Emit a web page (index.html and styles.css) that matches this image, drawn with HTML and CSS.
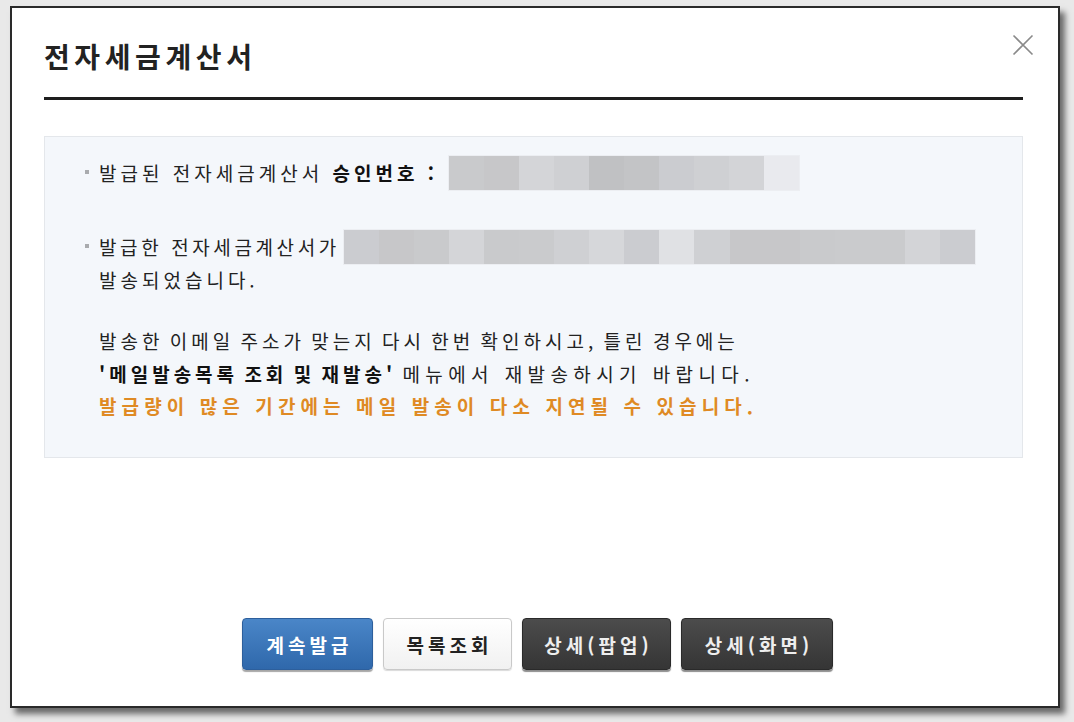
FILE: index.html
```html
<!DOCTYPE html>
<html lang="ko">
<head>
<meta charset="utf-8">
<title>전자세금계산서</title>
<link rel="stylesheet" href="styles.css">
</head>
<body>
<div class="dialog">
  <div class="header">
    <h1 class="title">전자세금계산서</h1>
    <button class="close" aria-label="닫기">
      <svg width="22" height="22" viewBox="0 0 22 22"><path d="M1.5 1.5 L20.5 20.5 M20.5 1.5 L1.5 20.5" stroke="#8a8a8a" stroke-width="1.6" fill="none"/></svg>
    </button>
  </div>
  <div class="body">
    <div class="info">
      <div class="item">
        <span class="bullet"></span>
        <p class="line">발급된 전자세금계산서 <b>승인번호 :</b><span class="mosaic m-short">
          <i class="c3"></i><i class="c2"></i><i class="c6"></i><i class="c5"></i><i class="c1"></i><i class="c1b"></i><i class="c4"></i><i class="c5"></i><i class="c6b"></i><i class="c9"></i>
        </span></p>
      </div>
      <div class="item">
        <span class="bullet"></span>
        <p class="line"><span class="tight">발급한 전자세금계산서가</span><span class="mosaic m-long">
          <i class="c4"></i><i class="c2"></i><i class="c3"></i><i class="c6"></i><i class="c3"></i><i class="c3b"></i><i class="c5"></i><i class="c7"></i><i class="c4"></i><i class="c8"></i><i class="c5"></i><i class="c2"></i><i class="c2"></i><i class="c3"></i><i class="c3b"></i><i class="c3b"></i><i class="c6b"></i><i class="c4"></i>
        </span><br>발송되었습니다.</p>
      </div>
      <div class="notice">
        <p class="line">발송한 이메일 주소가 맞는지 다시 한번 확인하시고, 틀린 경우에는</p>
        <p class="line"><b>'메일발송목록 조회 및 재발송'</b> <span class="wide">메뉴에서 재발송하시기 바랍니다.</span></p>
        <p class="line warn">발급량이 많은 기간에는 메일 발송이 다소 지연될 수 있습니다.</p>
      </div>
    </div>
  </div>
  <div class="actions">
    <button class="btn btn-blue">계속발급</button>
    <button class="btn btn-white">목록조회</button>
    <button class="btn btn-dark">상세(팝업)</button>
    <button class="btn btn-dark btn-wide">상세(화면)</button>
  </div>
</div>
</body>
</html>
```
FILE: styles.css
```css
html, body {
  margin: 0;
  padding: 0;
}
body {
  background: #e9e9e9;
  width: 1074px;
  height: 722px;
  overflow: hidden;
  font-family: "Noto Sans CJK KR", "Noto Sans", sans-serif;
  color: #222;
}
.dialog {
  box-sizing: border-box;
  margin: 6px 0 0 10px;
  width: 1050px;
  height: 702px;
  background: #fff;
  border: 2px solid #2a2a2a;
  box-shadow: 5px 6px 6px rgba(0, 0, 0, 0.55);
  display: flex;
  flex-direction: column;
  padding: 0 35px 0 32px;
}
.header {
  position: relative;
  padding: 30px 0 23px 0;
  border-bottom: 3px solid #1e1e1e;
}
.title {
  margin: 0;
  font-size: 28px;
  line-height: 36px;
  font-weight: 700;
  letter-spacing: 4.6px;
  color: #222;
}
.close {
  position: absolute;
  right: -11px;
  top: 26px;
  width: 22px;
  height: 22px;
  padding: 0;
  border: 0;
  background: transparent;
}
.close svg {
  display: block;
}
.body {
  flex: 1;
  padding-top: 36px;
}
.info {
  background: #f4f7fb;
  border: 1px solid #e4e7eb;
  padding: 19px 0 34px 54px;
  height: 322px;
  box-sizing: border-box;
}
.item {
  position: relative;
  margin-bottom: 41px;
}
.item + .item {
  margin-bottom: 29px;
}
.bullet {
  position: absolute;
  left: -14px;
  top: 14px;
  width: 4px;
  height: 4px;
  background: #a9abae;
}
.line {
  margin: 0;
  font-size: 19px;
  line-height: 33px;
  letter-spacing: 4px;
  word-spacing: 0;
  color: #222;
}
.line .tight {
  letter-spacing: 3.6px;
}
.notice .line {
  line-height: 32.5px;
  word-spacing: -3px;
}
.line b {
  font-weight: 700;
  color: #111;
}
.notice .wide {
  letter-spacing: 5.4px;
  word-spacing: 0;
}
.notice .warn {
  color: #df8a24;
  font-weight: 700;
  letter-spacing: 5.1px;
  word-spacing: 0;
}
.mosaic {
  display: inline-flex;
  vertical-align: top;
  height: 36px;
  margin-top: -1px;
  margin-bottom: -2px;
  border: 1px solid #eceef2;
  box-sizing: border-box;
}
.m-short {
  width: 352px;
  margin-left: 10px;
}
.m-long {
  width: 633px;
  margin-left: 3px;
}
.mosaic i {
  flex: 1;
  display: block;
}
.c1 { background: #c0c1c3; }
.c1b { background: #c3c4c6; }
.c2 { background: #c7c7c9; }
.c3 { background: #c9cacc; }
.c3b { background: #cacbcd; }
.c4 { background: #cbccd0; }
.c5 { background: #cfd0d3; }
.c6 { background: #d4d5d8; }
.c6b { background: #d3d4d7; }
.c7 { background: #d6d7da; }
.c8 { background: #e0e1e4; }
.c9 { background: #e9eaee; }
.actions {
  display: flex;
  justify-content: center;
  gap: 10px;
  padding: 0 0 36px 8px;
}
.btn {
  height: 52px;
  border-radius: 4px;
  font-family: "Noto Sans CJK KR", "Noto Sans", sans-serif;
  font-size: 19px;
  font-weight: 700;
  letter-spacing: 4px;
  text-indent: 4px;
  padding: 0;
  cursor: pointer;
}
.btn-blue {
  width: 131px;
  color: #fff;
  background: linear-gradient(#4a86c8, #2f68ab);
  border: 1px solid #2d5f9c;
  box-shadow: 0 2px 1px rgba(0, 0, 0, 0.35);
}
.btn-white {
  width: 129px;
  color: #222;
  background: linear-gradient(#ffffff, #f1f1f1);
  border: 1px solid #c9c9c9;
  box-shadow: 0 1px 1px rgba(0, 0, 0, 0.15);
}
.btn-dark {
  width: 149px;
  color: #eee;
  background: linear-gradient(#4c4c4c, #353535);
  border: 1px solid #2a2a2a;
  box-shadow: 0 2px 1px rgba(0, 0, 0, 0.45);
}
.btn-wide {
  width: 152px;
}
```
